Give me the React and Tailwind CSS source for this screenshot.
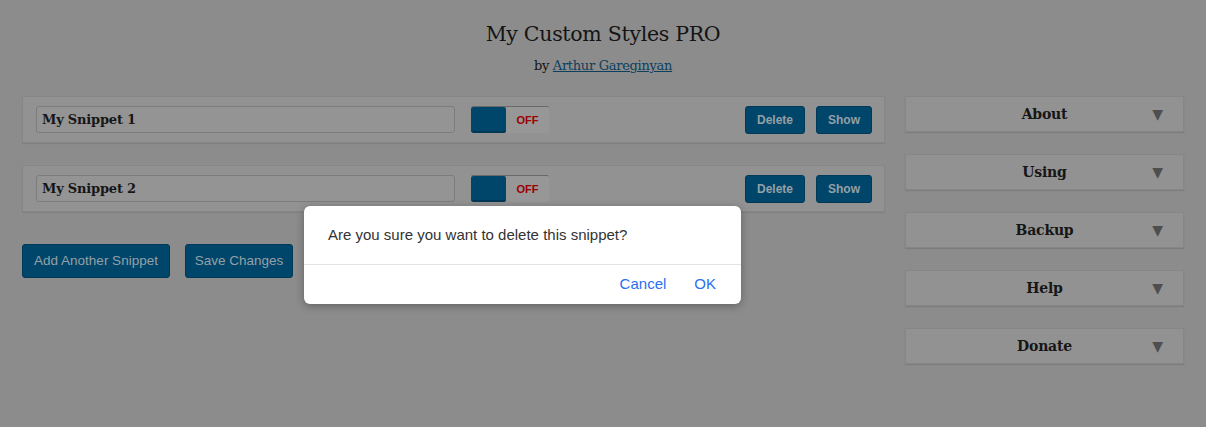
import React from "react";

function SnippetRow({ name }) {
  return (
    <div className="flex items-center h-[47px] border border-[#868686] bg-[#929292] pl-[13px] pr-[12px] shadow-[0_1px_1px_rgba(0,0,0,0.08)]">
      <div className="w-[419px] h-[27px] border border-[#7c7c7c] rounded-[3px] bg-[#949494] flex items-center pl-[5px]">
        <span className="font-['DejaVu_Serif',serif] font-bold text-[13px] tracking-[-0.2px] text-[#161616]">{name}</span>
      </div>
      <div className="ml-[16px] flex h-[27px] w-[78px] rounded-[2px] overflow-hidden bg-[#979797] border-t border-[#6a6a6a]">
        <div className="w-[35px] h-full bg-[#00466a] border-b-2 border-[#003754] rounded-[2px]" />
        <div className="flex-1 flex items-center justify-center text-[11px] font-bold text-[#9c0000] font-['Liberation_Sans',sans-serif]">
          OFF
        </div>
      </div>
      <div className="ml-auto flex gap-[11px]">
        <button className="h-[28px] w-[60px] rounded-[3px] bg-[#00466a] border border-[#003a5a] text-[12px] font-bold text-[#95a0a6] font-['Liberation_Sans',sans-serif]">
          Delete
        </button>
        <button className="h-[28px] w-[56px] rounded-[3px] bg-[#00466a] border border-[#003a5a] text-[12px] font-bold text-[#95a0a6] font-['Liberation_Sans',sans-serif]">
          Show
        </button>
      </div>
    </div>
  );
}

function SideItem({ label }) {
  return (
    <div className="relative flex items-center justify-center h-[36px] border border-[#868686] bg-[#929292] shadow-[0_1px_1px_rgba(0,0,0,0.1)]">
      <span className="text-[14px] font-bold text-[#161616] font-['DejaVu_Serif',serif] tracking-[-0.2px]">{label}</span>
      <span className="absolute right-[20px] top-[7px] text-[14px] text-[#4e4e4e] font-['DejaVu_Sans',sans-serif]">▼</span>
    </div>
  );
}

export default function App() {
  return (
    <div className="relative w-[1206px] h-[427px] bg-[#8c8c8c] overflow-hidden">
      <div className="flex flex-col items-center pt-[19px]">
        <h1 className="text-[20.5px] leading-[30px] text-[#141414] font-['DejaVu_Serif',serif] tracking-[-0.3px]">
          My Custom Styles PRO
        </h1>
        <p className="mt-[8px] text-[13px] leading-[18px] text-[#141414] font-['DejaVu_Serif',serif] tracking-[-0.3px]">
          by <span className="underline text-[#0d3f5c]">Arthur Gareginyan</span>
        </p>
      </div>
      <div className="flex gap-[20px] px-[22px] mt-[21px]">
        <div className="w-[863px] flex flex-col">
          <div className="flex flex-col gap-[22px]">
            <SnippetRow name="My Snippet 1" />
            <SnippetRow name="My Snippet 2" />
          </div>
          <div className="flex gap-[15px] mt-[32px]">
            <button className="h-[34px] w-[148px] rounded-[3px] bg-[#00466a] border border-[#003a5a] text-[13.5px] text-[#95a0a6] font-['Liberation_Sans',sans-serif]">
              Add Another Snippet
            </button>
            <button className="h-[34px] w-[108px] rounded-[3px] bg-[#00466a] border border-[#003a5a] text-[13.5px] text-[#95a0a6] font-['Liberation_Sans',sans-serif]">
              Save Changes
            </button>
          </div>
        </div>
        <div className="w-[279px] flex flex-col gap-[22px]">
          <SideItem label="About" />
          <SideItem label="Using" />
          <SideItem label="Backup" />
          <SideItem label="Help" />
          <SideItem label="Donate" />
        </div>
      </div>

      <div className="absolute left-[304px] top-[206px] w-[437px] h-[98px] bg-white rounded-[6px] shadow-[0_2px_8px_rgba(0,0,0,0.3)] flex flex-col font-['Liberation_Sans',sans-serif]">
        <div className="h-[58px] flex items-center pl-[24px] text-[15px] text-[#333333]">
          Are you sure you want to delete this snippet?
        </div>
        <div className="h-px bg-[#e3e3e3]" />
        <div className="flex-1 flex items-center justify-end gap-[28px] pr-[25px] text-[15px] text-[#2a6ff0]">
          <span>Cancel</span>
          <span>OK</span>
        </div>
      </div>
    </div>
  );
}
